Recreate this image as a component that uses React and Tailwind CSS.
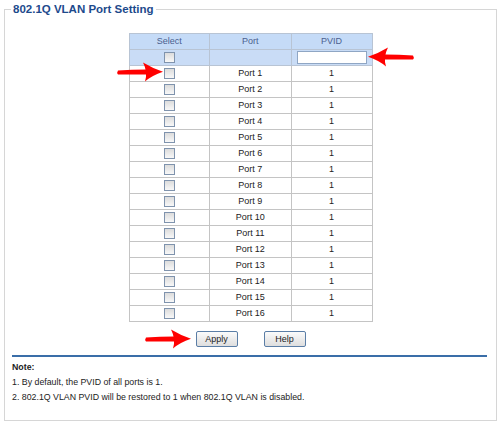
import React from 'react';

const ports = Array.from({ length: 16 }, (_, i) => ({ name: `Port ${i + 1}`, pvid: 1 }));

function Checkbox() {
  return (
    <span className="inline-block w-[11px] h-[11px] border border-[#7f93ad] bg-gradient-to-b from-[#dcdcdc] to-[#f8f8f8] align-middle" />
  );
}

function Arrow({ dir, className }) {
  // hand-drawn style red arrow, drawn pointing right then mirrored if needed
  return (
    <svg
      className={`absolute ${className}`}
      width="48"
      height="20"
      viewBox="0 0 48 20"
      style={dir === 'left' ? { transform: 'scaleX(-1)' } : undefined}
    >
      <path d="M2 8.5 Q16 7.5 30 7.5 L30 12.5 Q16 12.5 2 12.5 Q0.5 10.5 2 8.5 Z" fill="#f00" />
      <path d="M27 0.5 Q36 6 47 9.8 Q36 13.5 29 19.5 Q32 10 27 0.5 Z" fill="#f00" />
    </svg>
  );
}

export default function App() {
  return (
    <div className="w-[500px] h-[425px] bg-white pt-[9px] pl-[4px] pr-[3px] font-['Liberation_Sans',Arial,sans-serif] relative">
      <div className="relative border border-[#d6d6d6] h-[412px] pt-[23px]">
        <span className="absolute -top-[9px] left-[6px] bg-white px-[2px] text-[11.5px] leading-[16px] font-bold text-[#1d4a8c]">
          802.1Q VLAN Port Setting
        </span>

        <table className="mx-auto border-collapse w-[244px] text-[9px] text-[#222]">
          <thead>
            <tr className="bg-[#c5dbf7] text-[#4b5f8f]">
              <th className="border border-[#b8c4d4] h-[16px] p-0 font-normal w-[81px]">Select</th>
              <th className="border border-[#b8c4d4] h-[16px] p-0 font-normal w-[82px]">Port</th>
              <th className="border border-[#b8c4d4] h-[16px] p-0 font-normal w-[81px]">PVID</th>
            </tr>
          </thead>
          <tbody>
            <tr className="bg-[#c9dcf6]">
              <td className="border border-[#b8c4d4] h-[16px] p-0 text-center leading-none"><Checkbox /></td>
              <td className="border border-[#b8c4d4] h-[16px] p-0"></td>
              <td className="border border-[#b8c4d4] h-[16px] p-0 text-center leading-none">
                <span className="inline-block w-[70px] h-[13px] bg-white border border-[#8fa6c4] align-middle" />
              </td>
            </tr>
            {ports.map((p) => (
              <tr key={p.name}>
                <td className="border border-[#c4c4c4] h-[16px] p-0 text-center leading-none"><Checkbox /></td>
                <td className="border border-[#c4c4c4] h-[16px] p-0 text-center">{p.name}</td>
                <td className="border border-[#c4c4c4] h-[16px] p-0 text-center">{p.pvid}</td>
              </tr>
            ))}
          </tbody>
        </table>

        <div className="flex justify-center gap-[26px] mt-[9px]">
          <button className="w-[42px] h-[16px] border border-[#5b7ea6] rounded-[2px] bg-gradient-to-b from-[#fbfbfb] to-[#dedede] text-[9px] text-[#222] leading-none">Apply</button>
          <button className="w-[42px] h-[16px] border border-[#5b7ea6] rounded-[2px] bg-gradient-to-b from-[#fbfbfb] to-[#dedede] text-[9px] text-[#222] leading-none">Help</button>
        </div>

        <div className="ml-[7px] mr-[9px] mt-[8px] border-t-2 border-[#3a6ea8]" />
        <div className="ml-[7px] mt-[3px] text-[8.8px] text-[#222] leading-[15px]">
          <div className="font-bold">Note:</div>
          <div>1. By default, the PVID of all ports is 1.</div>
          <div>2. 802.1Q VLAN PVID will be restored to 1 when 802.1Q VLAN is disabled.</div>
        </div>
      </div>

      <Arrow dir="right" className="left-[116px] top-[62px]" />
      <Arrow dir="left" className="left-[367px] top-[47px]" />
      <Arrow dir="right" className="left-[144px] top-[329px]" />
    </div>
  );
}
